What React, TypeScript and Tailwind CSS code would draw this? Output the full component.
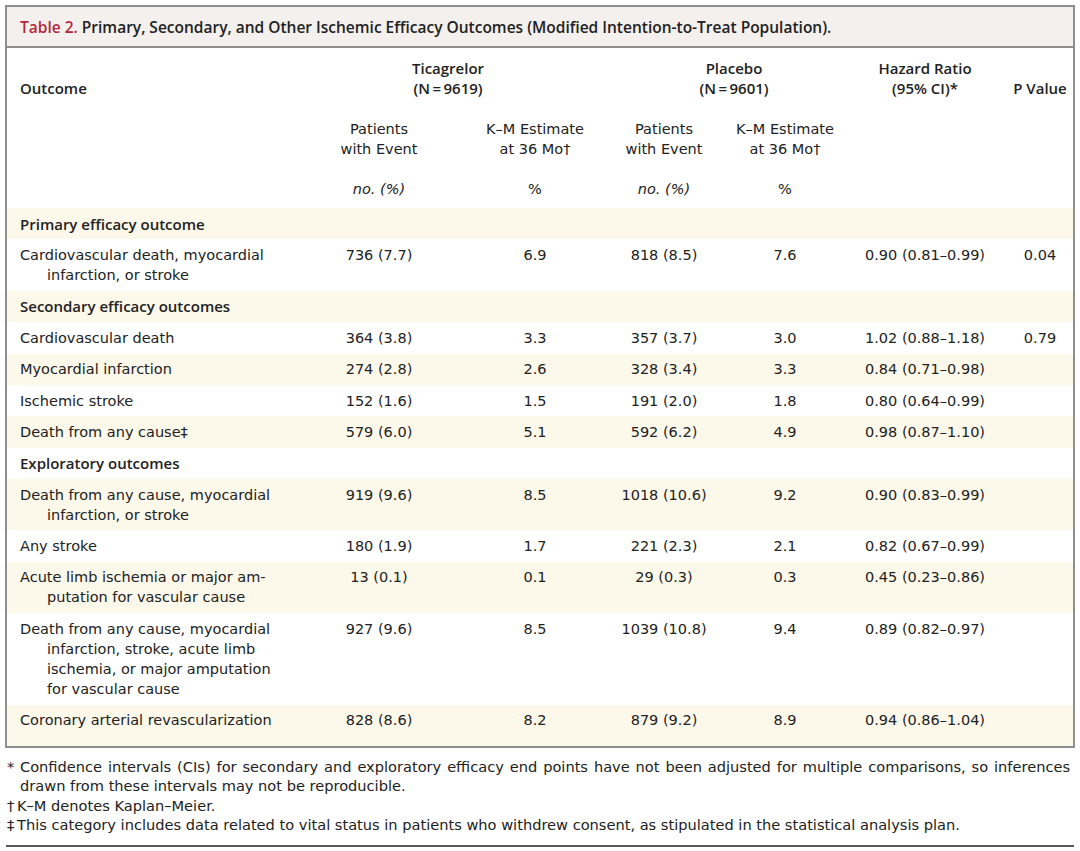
import React from "react";

const COLS = "grid grid-cols-[294px_156px_156px_102px_140px_152px_66px]";
const BOLD = "font-['Open_Sans',sans-serif] font-semibold text-[15px]";

type Row =
  | { section: string }
  | { lines: string[]; values: string[] };

const rows: Row[] = [
  { section: "Primary efficacy outcome" },
  {
    lines: ["Cardiovascular death, myocardial", "infarction, or stroke"],
    values: ["736 (7.7)", "6.9", "818 (8.5)", "7.6", "0.90 (0.81–0.99)", "0.04"],
  },
  { section: "Secondary efficacy outcomes" },
  {
    lines: ["Cardiovascular death"],
    values: ["364 (3.8)", "3.3", "357 (3.7)", "3.0", "1.02 (0.88–1.18)", "0.79"],
  },
  {
    lines: ["Myocardial infarction"],
    values: ["274 (2.8)", "2.6", "328 (3.4)", "3.3", "0.84 (0.71–0.98)", ""],
  },
  {
    lines: ["Ischemic stroke"],
    values: ["152 (1.6)", "1.5", "191 (2.0)", "1.8", "0.80 (0.64–0.99)", ""],
  },
  {
    lines: ["Death from any cause‡"],
    values: ["579 (6.0)", "5.1", "592 (6.2)", "4.9", "0.98 (0.87–1.10)", ""],
  },
  { section: "Exploratory outcomes" },
  {
    lines: ["Death from any cause, myocardial", "infarction, or stroke"],
    values: ["919 (9.6)", "8.5", "1018 (10.6)", "9.2", "0.90 (0.83–0.99)", ""],
  },
  {
    lines: ["Any stroke"],
    values: ["180 (1.9)", "1.7", "221 (2.3)", "2.1", "0.82 (0.67–0.99)", ""],
  },
  {
    lines: ["Acute limb ischemia or major am-", "putation for vascular cause"],
    values: ["13 (0.1)", "0.1", "29 (0.3)", "0.3", "0.45 (0.23–0.86)", ""],
  },
  {
    lines: [
      "Death from any cause, myocardial",
      "infarction, stroke, acute limb",
      "ischemia, or major amputation",
      "for vascular cause",
    ],
    values: ["927 (9.6)", "8.5", "1039 (10.8)", "9.4", "0.89 (0.82–0.97)", ""],
  },
  {
    lines: ["Coronary arterial revascularization"],
    values: ["828 (8.6)", "8.2", "879 (9.2)", "8.9", "0.94 (0.86–1.04)", ""],
  },
];

const TableRow = ({ row, striped, last }: { row: Row; striped: boolean; last: boolean }) => {
  const bg = striped ? "bg-[#fcf8ea]" : "bg-white";
  const pad = last ? "pt-[5.7px] pb-[15.5px]" : "py-[5.7px]";
  if ("section" in row) {
    return <div className={`${bg} ${pad} pl-[13px] ${BOLD}`}>{row.section}</div>;
  }
  return (
    <div className={`${COLS} ${bg} ${pad}`}>
      <div className="pl-[13px]">
        {row.lines.map((l, i) => (
          <div key={i} className={i > 0 ? "pl-[27px]" : ""}>
            {l}
          </div>
        ))}
      </div>
      {row.values.map((v, i) => (
        <div key={i} className={`text-center ${i === 4 ? "pr-3" : ""}`}>
          {v}
        </div>
      ))}
    </div>
  );
};

export default function App() {
  return (
    <div className="w-[1080px] h-[851px] bg-white pt-[5px] font-['DejaVu_Sans',sans-serif] text-[14.5px] leading-[20px] text-[#222]">
      <div className="ml-[5px] w-[1070px] border-2 border-[#8e8e8e]">
        <div className="h-[41px] flex items-center pl-[13px] bg-[#f3f0ee] border-b-2 border-[#8e8e8e] font-['Open_Sans',sans-serif] font-semibold text-[15.5px]">
          <span>
            <span className="text-[#b1283d]">Table 2.</span> Primary, Secondary, and Other Ischemic Efficacy Outcomes
            (Modified Intention-to-Treat Population).
          </span>
        </div>

        <div className="pt-[10px] pb-[9px]">
          <div className={`${COLS} ${BOLD}`}>
            <div className="pl-[13px] flex items-end">Outcome</div>
            <div className="col-span-2 text-center pr-[18px]">
              Ticagrelor
              <br />
              (N{"\u2009=\u2009"}9619)
            </div>
            <div className="col-span-2 text-center">
              Placebo
              <br />
              (N{"\u2009=\u2009"}9601)
            </div>
            <div className="text-center pr-3">
              Hazard Ratio
              <br />
              (95% CI)*
            </div>
            <div className="flex items-end justify-center">P Value</div>
          </div>
          <div className={`${COLS} mt-[21px]`}>
            <div />
            <div className="text-center">Patients<br />with Event</div>
            <div className="text-center">K–M Estimate<br />at 36 Mo†</div>
            <div className="text-center">Patients<br />with Event</div>
            <div className="text-center">K–M Estimate<br />at 36 Mo†</div>
          </div>
          <div className={`${COLS} mt-[20px] italic`}>
            <div />
            <div className="text-center">no. (%)</div>
            <div className="text-center not-italic">%</div>
            <div className="text-center">no. (%)</div>
            <div className="text-center not-italic">%</div>
          </div>
        </div>

        {rows.map((r, i) => (
          <TableRow key={i} row={r} striped={i % 2 === 0} last={i === rows.length - 1} />
        ))}
      </div>

      <div className="ml-[7px] mt-[9px] w-[1070px] text-[14.6px] leading-[19.5px] whitespace-nowrap">
        <div className="flex">
          <span className="w-[13px] shrink-0">*</span>
          <div>
            <div className="w-[1050px] text-justify [text-align-last:justify]">
              Confidence intervals (CIs) for secondary and exploratory efficacy end points have not been adjusted for
              multiple comparisons, so inferences
            </div>
            <div>drawn from these intervals may not be reproducible.</div>
          </div>
        </div>
        <div className="flex">
          <span className="w-[10px] shrink-0">†</span>
          <span>K–M denotes Kaplan–Meier.</span>
        </div>
        <div className="flex">
          <span className="w-[10px] shrink-0">‡</span>
          <span>
            This category includes data related to vital status in patients who withdrew consent, as stipulated in the
            statistical analysis plan.
          </span>
        </div>
      </div>
      <div className="ml-[6px] mt-[10px] w-[1068px] h-[2px] bg-[#5a5a5a]" />
    </div>
  );
}
